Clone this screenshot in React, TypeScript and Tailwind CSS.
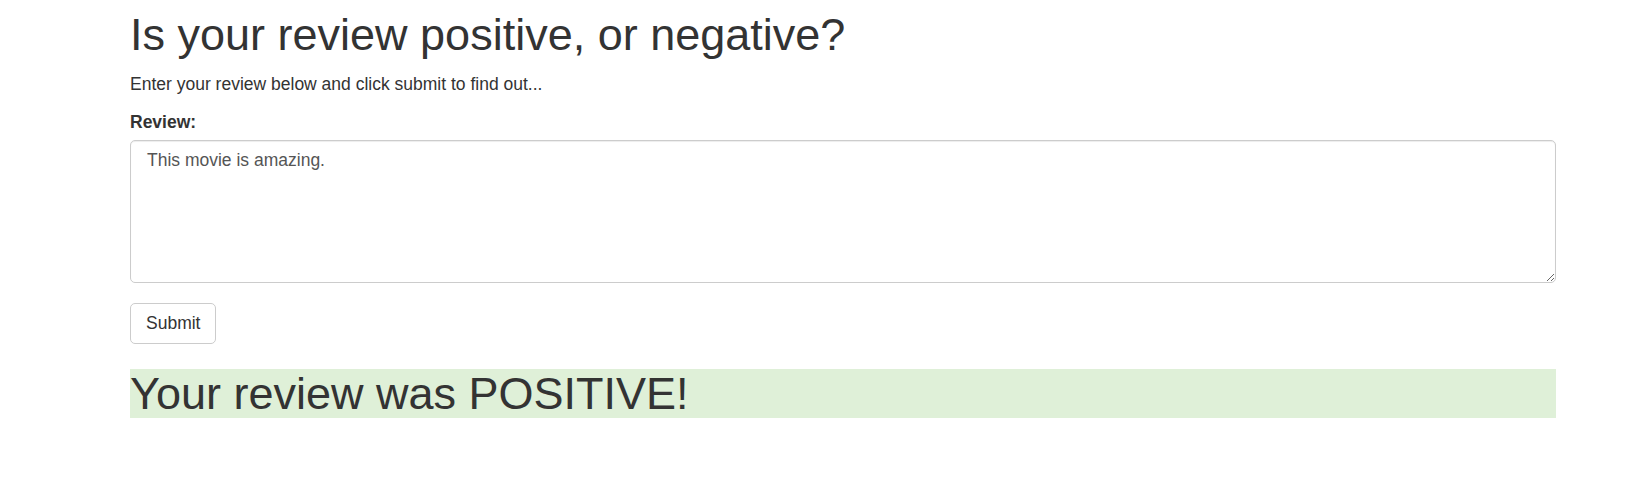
export default function App() {
  return (
    <main className="min-h-screen bg-white text-[#333] font-['Liberation_Sans',Arial,sans-serif]">
      <div className="pl-[130px]">
        <div className="w-[1426px]">
          <h1 className="pt-[10px] mb-[12.5px] text-[45px] leading-[49.5px] font-normal">
            Is your review positive, or negative?
          </h1>
          <p className="mb-[12.5px] text-[17.5px] leading-[25px]">
            Enter your review below and click submit to find out...
          </p>
          <form onSubmit={(e) => e.preventDefault()}>
            <div className="mb-[20px]">
              <label className="block mb-[6px] text-[17.5px] leading-[24px] font-bold">
                Review:
              </label>
              <textarea
                className="block w-full h-[143px] pl-[16px] pr-[15px] py-[7px] text-[17.5px] leading-[25px] text-[#555] border border-[#ccc] rounded-[5px] shadow-[inset_0_1px_1px_rgba(0,0,0,0.075)] outline-none"
                defaultValue="This movie is amazing."
              />
            </div>
            <button
              type="submit"
              className="h-[41px] px-[15px] text-[17.5px] leading-[25px] text-[#333] bg-white border border-[#ccc] rounded-[5px]"
            >
              Submit
            </button>
          </form>
          <h1 className="mt-[25px] bg-[#dff0d8] text-[45px] leading-[49px] font-normal">
            Your review was POSITIVE!
          </h1>
        </div>
      </div>
    </main>
  );
}
